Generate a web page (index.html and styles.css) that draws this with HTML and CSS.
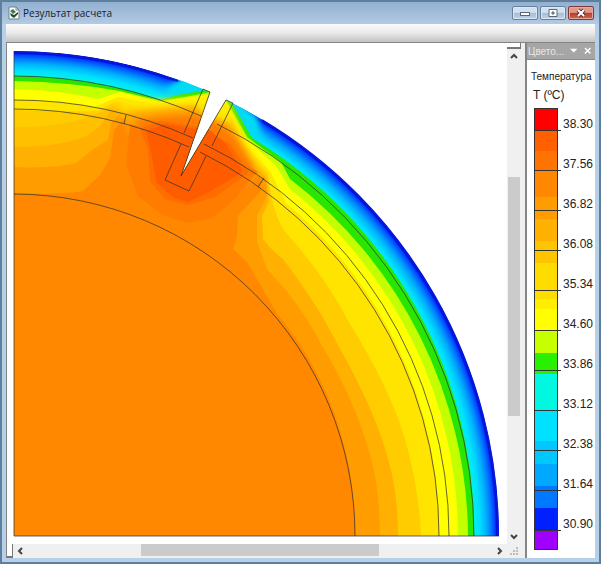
FILE: index.html
```
<!DOCTYPE html>
<html lang="ru">
<head>
    <meta charset="UTF-8">
    <meta name="viewport" content="width=device-width, initial-scale=1.0">
    <title>Результат расчета</title>
    <link rel="stylesheet" href="styles.css">
</head>
<body>
    <div class="window">
        <header class="title-bar">
            <svg class="app-icon" viewBox="0 0 12 14" aria-hidden="true">
                <path d="M1 1H8L11 4V13H1Z" fill="#fff" stroke="#6f8580"/>
                <path d="M8 1V4H11" fill="none" stroke="#6f8580"/>
                <path d="M2 5L5 3L8 6L5 8Z" fill="#427b52"/>
                <path d="M3 10L6 12L10 8V6L6 9L2 7Z" fill="#29483d"/>
            </svg>
            <h1 class="title">Результат расчета</h1>
            <div class="window-buttons">
                <button class="win-btn" type="button" aria-label="Свернуть">
                    <svg viewBox="0 0 12 10"><rect x="1.5" y="4.5" width="9" height="3" fill="#fff" stroke="#596879"/></svg>
                </button>
                <button class="win-btn" type="button" aria-label="Развернуть">
                    <svg viewBox="0 0 12 10"><path d="M2 1.5H10V8.5H2Z" fill="#fff" stroke="#596879"/><path d="M5 4H7V6H5Z" fill="#9ab" stroke="#596879"/></svg>
                </button>
                <button class="win-btn close-btn" type="button" aria-label="Закрыть">
                    <svg viewBox="0 0 12 10"><path d="M3 2L9 8M9 2L3 8" stroke="#693030" stroke-width="4"/><path d="M3 2L9 8M9 2L3 8" stroke="#fff" stroke-width="2"/></svg>
                </button>
            </div>
        </header>

        <div class="toolbar"></div>

        <main class="workspace">
            <section class="viewer">
                <svg class="plot" viewBox="7 44 500 500" preserveAspectRatio="xMinYMin meet" role="img" aria-label="Распределение температуры">
                    <defs>
                        <radialGradient id="skin" gradientUnits="userSpaceOnUse" cx="14" cy="537" r="485">
                            <stop offset="0.948" stop-color="#00f4e4"/>
                            <stop offset="0.96" stop-color="#00e0ff"/>
                            <stop offset="0.973" stop-color="#00b4fc"/>
                            <stop offset="0.984" stop-color="#0078ff"/>
                            <stop offset="0.992" stop-color="#0040ff"/>
                            <stop offset="0.995" stop-color="#0010dc"/>
                        </radialGradient>
                        <clipPath id="body-area">
                            <path d="M14 537V52A485 485 0 0 1 210 93L181 177L226 101A485 485 0 0 1 499 537Z"/>
                        </clipPath>
                        <filter id="soft" x="-20%" y="-20%" width="140%" height="140%">
                            <feGaussianBlur stdDeviation="3"/>
                        </filter>
                    </defs>

                    <g clip-path="url(#body-area)">
                        <circle cx="14" cy="537" r="485" fill="url(#skin)"/>
                        <!-- cooler skin fades out beside the cut -->
                        <path d="M168 88L184 76L216 88L208 98L160 101Z" fill="#00dcf4" filter="url(#soft)"/>
                        <path d="M222 96L240 100L258 118L262 146L248 138Z" fill="#00dcf4" filter="url(#soft)"/>

                        <!-- isotherms, cold to hot -->
                        <path fill="#28e600" d="M14 537V77A460 460 0 0 1 160 101L178 96L212 90L226 99L231 103L252 139A460 460 0 0 1 474 537Z"/>
                        <path fill="#c4ff00" d="M14 537V82Q70 83 120 92L160 102L185 98L212 93L226 101L247 138L281 163L290 180A454 454 0 0 1 468 537Z"/>
                        <path fill="#ffff00" d="M14 537V90Q60 91 98 100L120 93L160 103L208 96L226 103L243 137L276 167L290 190A444 444 0 0 1 458 537Z"/>
                        <path fill="#ffe400" d="M14 537V101Q60 102 94 108L118 98L160 107L206 105L230 116L241 142L270 172L286 204A427 427 0 0 1 439 537Z"/>
                        <path fill="#ffcc00" d="M14 537V111Q64 113 98 112L116 102L160 111L206 111L230 124L242 147L268 175L272 200Q276 218 283 230Q327 280 347 320Q390 389 405 440Q419 489 421 537Z"/>
                        <path fill="#ffc000" d="M14 537V128Q60 128 85 119L102 113L119 104L160 113L206 115L235 140L267 178L270 203L262 217L263 240Q270 250 283 260Q318 306 340 350Q375 412 388 460Q398 495 398 537Z"/>
                        <path fill="#ffb000" d="M14 537V148Q65 148 90 135L102 125L109 114L122 107L160 115L206 117L235 143L267 180L268 203L262 217L263 240Q270 250 283 260Q318 306 340 350Q375 412 388 460Q398 495 398 537Z"/>
                        <path fill="#ff9c00" d="M14 537V168Q50 170 76 164L95 149L108 141L111 124L124 110L160 117L206 120L235 146L266 182L267 197L257 217L257 243L267 270Q300 304 320 343Q363 415 375 477Q380 505 380 537Z"/>
                        <path fill="#ff8800" d="M14 537V194Q60 196 83 192L100 176L110 160L114 132L128 113L160 119L206 122L235 148L262 182L260 193L238 217L237 237L233 250L247 263L276 313A341 341 0 0 1 355 537Z"/>
                        <circle cx="14" cy="537" r="341" fill="#ff8800"/>

                        <!-- hot spot around the cut -->
                        <g filter="url(#soft)">
                            <path fill="#ffe800" d="M114 101L150 101L202 98L212 94L230 104L248 145L265 170L245 180L130 130Z" opacity="0.8"/>
                            <path fill="#ffa800" d="M124 113L160 109L196 106L204 116L232 124L250 156L262 174L245 182L130 135Z"/>
                            <path fill="#ff7c00" d="M134 121L160 117L194 115L210 118L234 136L254 168L245 178L140 140Z"/>
                        </g>
                        <path fill="#ff7c00" d="M130 125L126 165L138 197L162 216L188 224L212 219L234 201L250 181L258 173L240 160L170 135Z"/>
                        <path fill="#ff6c00" d="M140 130L148 151L150 182L165 200L188 206L215 198L240 180L249 173L230 145L200 128L160 122Z"/>
                        <path fill="#ff5c00" d="M146 132L152 158L156 183L174 199L188 203L207 194L240 175L242 170L224 143L202 125L196 130L165 125Z"/>
                    </g>

                    <!-- tissue borders -->
                    <g class="outline">
                        <path d="M14 52V537H499"/>
                        <path d="M14 77A460 460 0 0 1 201 117M217 125A460 460 0 0 1 474 537"/>
                        <path d="M14 101A436 436 0 0 1 193 139M204 145A436 436 0 0 1 449 537"/>
                        <path d="M14 110A427 427 0 0 1 189 148M200 153A427 427 0 0 1 439 537"/>
                        <path d="M14 195A342 342 0 0 1 355 537"/>
                        <path d="M126 116L124 125M264 179L258 188"/>
                        <path d="M203 90L184 134M233 104L212 147"/>
                        <path d="M181 145L165 181L189 192L206 157"/>
                        <path d="M203 90L210 93L181 177L226 101L233 104"/>
                    </g>
                    <path class="skin-edge" d="M14 53A484 484 0 0 1 178 82M262 121A484 484 0 0 1 498 537"/>
                </svg>
                <div class="v-scroll">
                    <span class="split-handle"></span>
                    <button class="arrow" type="button" aria-label="Вверх"><svg viewBox="0 0 8 8"><path d="M1 6L4 3L7 6"/></svg></button>
                    <div class="track"><div class="thumb"></div></div>
                    <button class="arrow" type="button" aria-label="Вниз"><svg viewBox="0 0 8 8"><path d="M1 2L4 5L7 2"/></svg></button>
                </div>
                <div class="h-scroll">
                    <span class="split-handle"></span>
                    <button class="arrow" type="button" aria-label="Влево"><svg viewBox="0 0 8 8"><path d="M6 1L3 4L6 7"/></svg></button>
                    <div class="track"><div class="thumb"></div></div>
                    <button class="arrow" type="button" aria-label="Вправо"><svg viewBox="0 0 8 8"><path d="M2 1L5 4L2 7"/></svg></button>
                </div>
                <svg class="grip" viewBox="0 0 14 14" aria-hidden="true"><path d="M9 3h2v2h-2zM6 6h2v2h-2zM9 6h2v2h-2zM3 9h2v2h-2zM6 9h2v2h-2zM9 9h2v2h-2z" fill="#bdbdbd"/></svg>
            </section>

            <aside class="legend">
                <div class="legend-header">
                    <h2 class="legend-title">Цвето...</h2>
                    <button class="legend-btn" type="button" aria-label="Меню"><svg viewBox="0 0 8 8"><path d="M0 2H8L4 6Z" fill="#fff"/></svg></button>
                    <button class="legend-btn" type="button" aria-label="Закрыть панель"><svg viewBox="0 0 8 8"><path d="M1 1L7 7M7 1L1 7" stroke="#fff" stroke-width="1.5"/></svg></button>
                </div>
                <div class="legend-body">
                    <p class="quantity">Температура</p>
                    <p class="unit">T (ºC)</p>
                    <div class="scale">
                        <div class="color-bar"></div>
                        <ul class="values">
                            <li>38.30</li>
                            <li>37.56</li>
                            <li>36.82</li>
                            <li>36.08</li>
                            <li>35.34</li>
                            <li>34.60</li>
                            <li>33.86</li>
                            <li>33.12</li>
                            <li>32.38</li>
                            <li>31.64</li>
                            <li>30.90</li>
                        </ul>
                    </div>
                </div>
            </aside>
        </main>
    </div>
</body>
</html>
```
FILE: styles.css
```
* {
    box-sizing: border-box;
}

body {
    margin: 0;
    font-family: "Liberation Sans", Arial, sans-serif;
    font-size: 12px;
    color: #222;
    background-color: #b4cde4;
}

h1, h2, p, ul {
    margin: 0;
    padding: 0;
    font-weight: normal;
}

button {
    padding: 0;
    border: 0;
    background: none;
}

.window {
    display: flex;
    flex-direction: column;
    min-height: 100vh;
    padding: 0 4px 4px;
    border: 2px solid #5f7f9d;
    background: #b6d0e8;
}

/* Title bar */
.title-bar {
    display: flex;
    align-items: center;
    gap: 3px;
    height: 22px;
    margin: 0 -4px;
    padding: 0 5px 0 6px;
    background: linear-gradient(to bottom, #91b0d0, #b3cae3);
}

.app-icon {
    width: 12px;
    height: 14px;
}

.title {
    flex: 1;
    font-family: "Open Sans", "Noto Sans", sans-serif;
    font-size: 10px;
    color: #17202c;
}

.window-buttons {
    display: flex;
    gap: 2px;
}

.win-btn {
    display: flex;
    align-items: center;
    justify-content: center;
    width: 26px;
    height: 14px;
    border: 1px solid #67809c;
    border-radius: 2px;
    background: linear-gradient(to bottom, #d2e0ef 45%, #a4bdd7 50%, #bed2e7);
    box-shadow: inset 0 0 0 1px #dce8f4;
}

.win-btn svg {
    width: 12px;
    height: 10px;
}

.close-btn {
    border-color: #803a35;
    background: linear-gradient(to bottom, #df9a8d 45%, #bc3b25 50%, #cf684f);
    box-shadow: inset 0 0 0 1px #e4aaa0;
}

.toolbar {
    height: 18px;
    background: linear-gradient(to bottom, #fbfbfb, #e9e9e9 50%, #c3c3c3);
}

/* Main area */
.workspace {
    display: flex;
    flex: 1;
    background: #f0f0f0;
    border-top: 1px solid #858585;
}

.viewer {
    display: grid;
    flex: 1;
    grid-template-columns: minmax(0, 1fr) 14px;
    grid-template-rows: 1fr 14px;
    background: #fff;
    border-left: 1px solid #858585;
}

.plot {
    display: block;
    width: 100%;
}

.outline {
    fill: none;
    stroke: #333333;
    stroke-opacity: 0.75;
    stroke-width: 1;
}

.skin-edge {
    fill: none;
    stroke: #0718d8;
    stroke-width: 2;
}

/* Scroll bars */
.v-scroll,
.h-scroll {
    display: flex;
    background: #f0f0f0;
}

.v-scroll {
    flex-direction: column;
}

.split-handle {
    width: 100%;
    height: 6px;
    background: #fff;
    border-right: 1px solid #777;
    border-bottom: 2px solid #777;
}

.h-scroll .split-handle {
    width: 6px;
    height: 100%;
}

.arrow {
    display: flex;
    align-items: center;
    justify-content: center;
    width: 14px;
    height: 14px;
}

.arrow svg {
    width: 8px;
    height: 8px;
    fill: none;
    stroke: #444;
    stroke-width: 2;
}

.track {
    display: flex;
    flex: 1;
    justify-content: center;
}

.v-scroll .track {
    flex-direction: column;
    align-items: center;
}

.thumb {
    width: 51%;
    height: 12px;
    background: #cbcbcb;
}

.v-scroll .thumb {
    width: 12px;
    height: 51%;
}

.grip {
    width: 14px;
    height: 14px;
    background: #f0f0f0;
}

/* Colour scale panel */
.legend {
    display: flex;
    flex-direction: column;
    width: 70px;
    margin-left: 4px;
    background: #fff;
    border-left: 2px solid #858585;
}

.legend-header {
    display: flex;
    align-items: center;
    gap: 6px;
    height: 17px;
    padding: 0 4px 0 1px;
    background: #a6a6a6;
    border-bottom: 1px solid #8a8a8a;
}

.legend-title {
    flex: 1;
    font-size: 10px;
    color: #e8e8e8;
}

.legend-btn {
    width: 8px;
    height: 8px;
}

.legend-btn svg {
    display: block;
}

.legend-body {
    padding: 10px 0 0 4px;
}

.quantity {
    font-size: 10px;
    line-height: 14px;
}

.unit {
    padding-left: 2px;
    line-height: 22px;
}

.scale {
    display: flex;
    margin: 2px 0 0 3px;
}

.color-bar {
    width: 24px;
    height: 442px;
    border: 1px solid #333;
    background:
        linear-gradient(to bottom, transparent 39px, #333 39px) 0 -18px / 100% 40px,
        linear-gradient(to bottom,
            #ff0000 22px,
            #ff6000 22px 42px,
            #ff7400 42px 62px,
            #ff8800 62px 88px,
            #ff9c00 88px 110px,
            #ffb000 110px 132px,
            #ffc400 132px 154px,
            #ffdc00 154px 190px,
            #ffee00 190px 200px,
            #ffff00 200px 222px,
            #c8ff00 222px 244px,
            #28f000 244px 265px,
            #00f8e0 265px 302px,
            #00e0ff 302px 332px,
            #00c8ff 332px 355px,
            #00a8ff 355px 377px,
            #0078ff 377px 399px,
            #0020ff 399px 422px,
            #a000ff 422px);
}

.values {
    flex: 1;
    margin-top: -17px;
    list-style: none;
}

.values li {
    display: flex;
    align-items: flex-end;
    gap: 2px;
    height: 40px;
    line-height: 14px;
}

.values li::before {
    content: "";
    width: 3px;
    height: 1px;
    background: #333;
}
```
